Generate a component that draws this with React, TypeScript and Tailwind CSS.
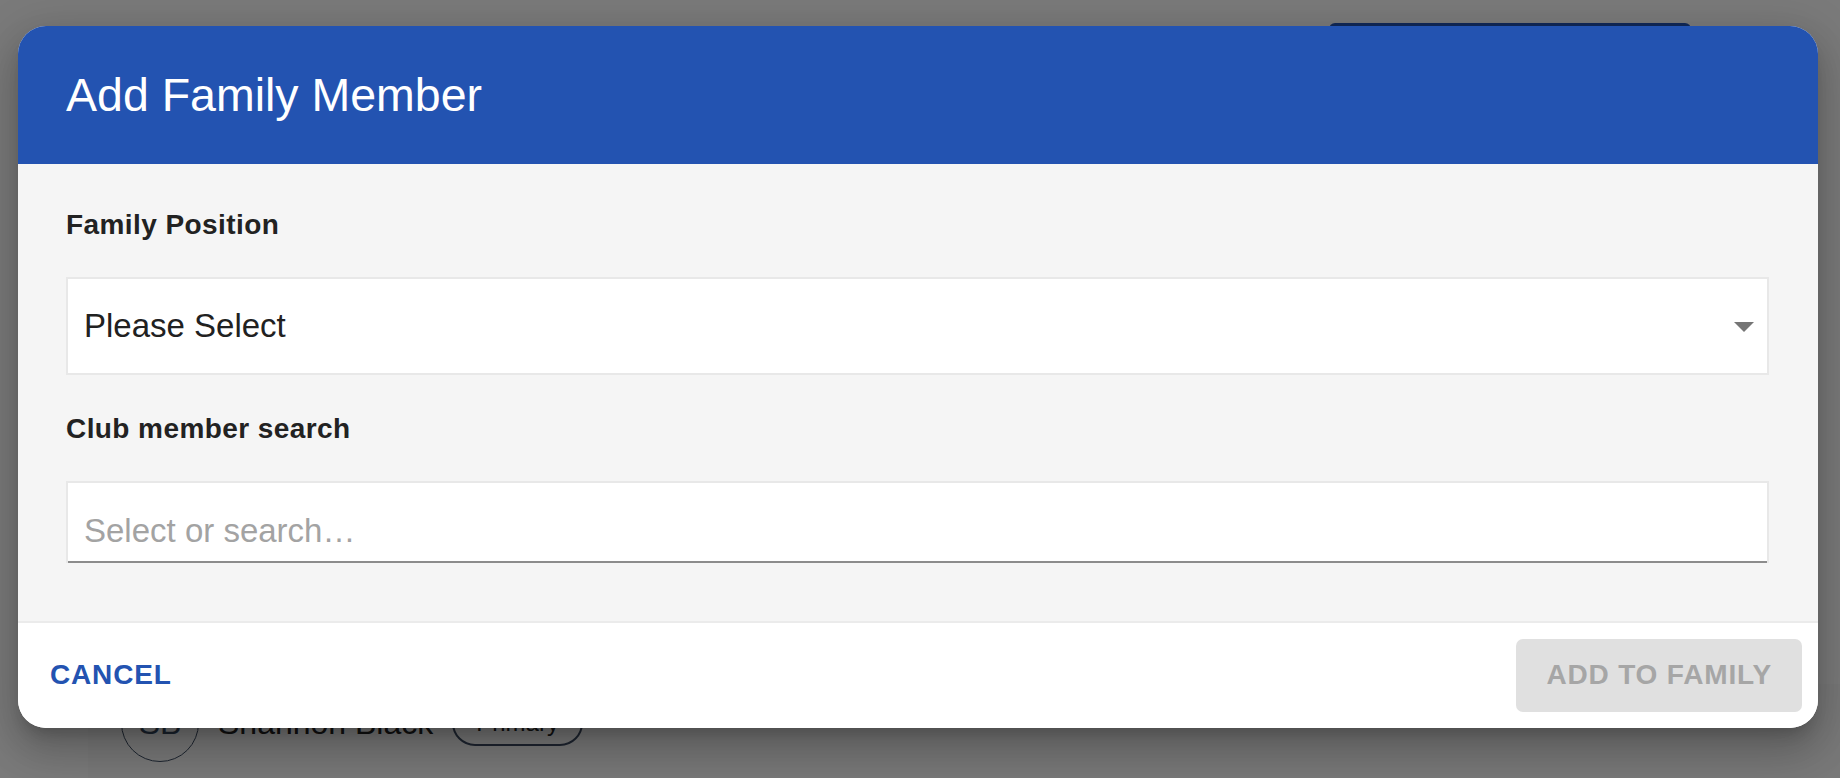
import React from "react";

export default function App() {
  return (
    <div className="relative w-[1840px] h-[778px] overflow-hidden bg-[#f5f5f5] font-['Liberation_Sans',Arial,sans-serif]">
      {/* page behind the dialog */}
      <div className="flex flex-col">
        <div className="flex justify-end pr-[149px] pt-[23px]">
          <div className="w-[362px] h-[56px] rounded-[6px] bg-[#2353b1]" />
        </div>
        <div className="ml-[88px] mt-[605px] h-[200px] bg-[#f1f1f1] pl-[33px] flex items-start">
          <div className="flex items-center gap-[19px]">
            <div className="w-[78px] h-[78px] rounded-full border-[1.5px] border-[#3c4b60] flex items-center justify-center text-[32px] text-[#34465c]">
              SB
            </div>
            <span className="text-[32px] text-[#222] leading-[40px]">Shannon Black</span>
            <span className="h-[46px] px-[22px] rounded-full border-2 border-[#3c4b60] text-[24px] text-[#222] flex items-center">
              Primary
            </span>
          </div>
        </div>
      </div>

      {/* backdrop */}
      <div className="absolute inset-0 bg-black/50" />

      {/* dialog */}
      <div className="absolute left-[18px] top-[26px] w-[1800px] rounded-[28px] overflow-hidden bg-white shadow-[0px_11px_15px_-7px_rgba(0,0,0,0.2),0px_24px_38px_3px_rgba(0,0,0,0.14),0px_9px_46px_8px_rgba(0,0,0,0.12)]">
        <div className="h-[138px] bg-[#2353b1] flex items-center pl-[48px]">
          <h2 className="text-[46.5px] leading-[56px] text-white font-normal">Add Family Member</h2>
        </div>

        <div className="bg-[#f5f5f5] pl-[48px] pr-[49px] pt-[45px] pb-[58px]">
          <div className="text-[28px] leading-[32px] font-bold tracking-[0.015em] text-[#222222]">Family Position</div>
          <div className="mt-[36px] h-[98px] border-2 border-[#e8e8e8] bg-white flex items-center justify-between pl-[16px] pr-[13px]">
            <span className="text-[33px] leading-[40px] text-[#212121]">Please Select</span>
            <svg width="20" height="10" viewBox="0 0 20 10" className="mt-[2px]">
              <path d="M0 0 L20 0 L10 10 Z" fill="#757575" />
            </svg>
          </div>

          <div className="mt-[38px] text-[28px] leading-[32px] font-bold tracking-[0.015em] text-[#222222]">Club member search</div>
          <div className="mt-[36px] h-[82px] border-2 border-b-0 border-[#e8e8e8] bg-white">
            <div className="h-full border-b-2 border-[#8c8c8c] pl-[16px] pt-[28px]">
              <span className="text-[33px] leading-[40px] text-[#a3a3a3]">Select or search…</span>
            </div>
          </div>
        </div>

        <div className="border-t-2 border-[#ebebeb] bg-white flex items-center justify-between px-[16px] pt-[16px] pb-[16px]">
          <button className="h-[73px] px-[16px] pb-[2px] text-[28px] font-bold tracking-[0.03em] text-[#2353b1]">CANCEL</button>
          <button disabled className="h-[73px] px-[30px] pb-[2px] rounded-[7px] bg-[#e0e0e0] text-[28px] font-bold tracking-[0.03em] text-[#a6a6a6]">
            ADD TO FAMILY
          </button>
        </div>
      </div>
    </div>
  );
}
